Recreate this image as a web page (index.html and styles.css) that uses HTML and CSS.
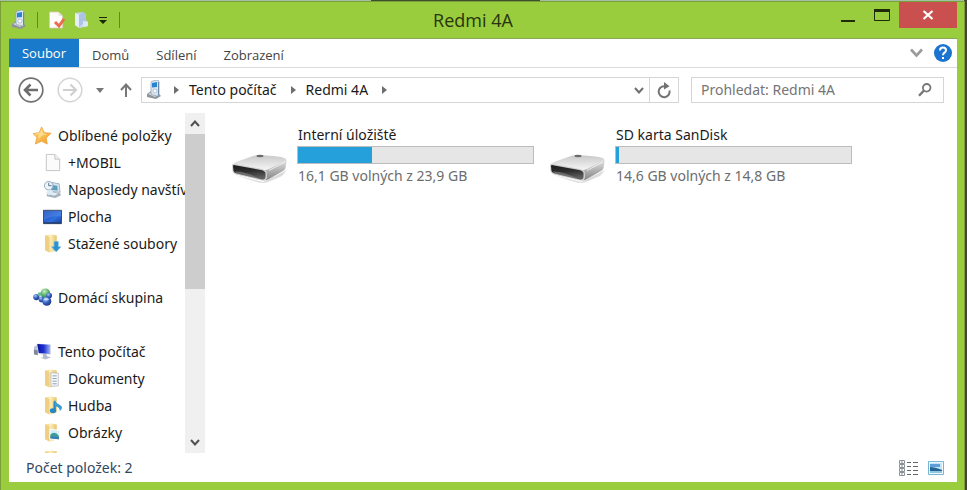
FILE: index.html
```html
<!DOCTYPE html>
<html lang="cs">
<head>
<meta charset="utf-8">
<title>Redmi 4A</title>
<link rel="stylesheet" href="styles.css">
</head>
<body>
<svg class="defs" aria-hidden="true">
  <defs>
    <linearGradient id="g-folder" x1="0" x2="1"><stop offset="0" stop-color="#f3d27a"/><stop offset=".5" stop-color="#fbeab4"/><stop offset="1" stop-color="#e9c469"/></linearGradient>
    <linearGradient id="g-screen" x1="0" y1="0" x2="1" y2="1"><stop offset="0" stop-color="#1b3fa8"/><stop offset=".6" stop-color="#2f6fe0"/><stop offset="1" stop-color="#1c3f9c"/></linearGradient>
    <linearGradient id="g-pc" x1="0" x2="1"><stop offset="0" stop-color="#0a14a0"/><stop offset=".5" stop-color="#1c2fd0"/><stop offset="1" stop-color="#9db4ef"/></linearGradient>
    <linearGradient id="g-top" x1="0" y1="0" x2="0" y2="1"><stop offset="0" stop-color="#c8c8c8"/><stop offset="1" stop-color="#f6f6f6"/></linearGradient>
    <linearGradient id="g-side" x1="0" y1="0" x2="0" y2="1"><stop offset="0" stop-color="#e8e8e8"/><stop offset=".5" stop-color="#b4b4b4"/><stop offset="1" stop-color="#858585"/></linearGradient>
    <linearGradient id="g-slot" x1="0" y1="0" x2=".2" y2="1"><stop offset="0" stop-color="#1a1a1a"/><stop offset=".5" stop-color="#2e2e2e"/><stop offset="1" stop-color="#606060"/></linearGradient>
    <linearGradient id="g-star" x1="0" y1="0" x2="1" y2="1"><stop offset="0" stop-color="#ffe08a"/><stop offset="1" stop-color="#f39a1e"/></linearGradient>
    <radialGradient id="g-ballb" cx=".35" cy=".3" r=".8"><stop offset="0" stop-color="#a9c6f5"/><stop offset=".5" stop-color="#3560c0"/><stop offset="1" stop-color="#16307c"/></radialGradient>
    <radialGradient id="g-ballg" cx=".4" cy=".3" r=".8"><stop offset="0" stop-color="#c4f0c0"/><stop offset=".6" stop-color="#4fa862"/><stop offset="1" stop-color="#2a7548"/></radialGradient>
  </defs>
  <symbol id="player" viewBox="0 0 16 20">
    <path d="M1 14l4-3 8 3 2 2-5 3-9-2z" fill="#8e9499"/><path d="M2 14l4-2 6 3-3 2z" fill="#d3d8dc"/>
    <path d="M5 3q0-2 2-2l4-1q2 0 2 2v12q0 2-2 2l-4-1q-2 0-2-2z" fill="#dce7f0" stroke="#8aa0b5" stroke-width=".7"/>
    <path d="M6 3l5-1v5l-5 .5z" fill="#2784d3"/><circle cx="9" cy="11" r="2" fill="#f7fbff" stroke="#93a7bb" stroke-width=".6"/><path d="M12.500 2v13" stroke="#6889a9"/>
  </symbol>
  <symbol id="folder" viewBox="0 0 18 18">
    <path d="M2 1.500l6-1 5 1v14l-6 2-5-2z" fill="url(#g-folder)"/><path d="M2 1.500l4 1.500v14.500l-4-2z" fill="#efd083"/><path d="M6 3l2-2.500" stroke="#fff4cf"/>
  </symbol>
  <symbol id="drive" viewBox="0 0 58 36">
    <path d="M4 24L32 31 56 19 51 25 37 31Q32 33 26 31z" fill="#dcdcdc"/>
    <path d="M31 17L54 8Q56 8 55.500 11L54.500 17Q54 19 52 20L38 28Q35 30 31 29z" fill="url(#g-side)"/>
    <path d="M1 14Q2 12 5 11L22 5Q26 3.500 30 4L47 5.500Q54 6.500 55 8Q55 10 52 11L38 18Q35 19.500 31 19L4 15z" fill="url(#g-top)"/>
    <path d="M1 14Q1 12.500 4 13L31 18Q36 19 36 22V26Q36 30 31 29.500L5 23.500Q2 22.500 1.500 20z" fill="#cdcdcd"/>
    <path d="M2 15Q2 13.800 4 14.200L30 19Q34.500 20 34.500 22.500V25.500Q34.500 29 31 28.500L6 22.500Q3 21.500 2.500 20z" fill="url(#g-slot)"/>
    <path d="M4 20.500Q14 20 29 28L6 22.500z" fill="#8a8a8a" opacity=".6"/>
    <ellipse cx="29" cy="5" rx="3.500" ry="1.200" fill="#6b6b6b"/>
    <path d="M38 19.500L54 11" stroke="#fff" stroke-opacity=".7"/>
  </symbol>
</svg>

<div class="desktop">
<main class="window">
  <header class="titlebar">
    <div class="quick">
      <svg class="q-player" viewBox="0 0 16 20"><use href="#player"/></svg>
      <span class="sep"></span>
      <button class="plain" aria-label="Vlastnosti"><svg width="18" height="18" viewBox="0 0 18 18"><path d="M1.500 1h9l4 4v12h-13z" fill="#fffdfb" stroke="#d9c9ba" stroke-width=".8"/><path d="M10.500 1v4h4" fill="#e8e4df"/><path d="M7 11l4 4 5-7" fill="none" stroke="#ea6c4e" stroke-width="3"/></svg></button>
      <button class="plain" aria-label="Nová složka"><svg width="16" height="18" viewBox="0 0 16 18"><path d="M2 2l7-1 4 2v6l2 2v4l-8 2-5-3z" fill="#c6d6ee"/><path d="M2 2l4 2v13l-4-3z" fill="#e5edf8"/><path d="M6 4l3-3 4 2v7l-7 6z" fill="#adc3e3"/><path d="M10 10l5 1v4l-5 1z" fill="#dce6f3"/></svg></button>
      <button class="plain caret" aria-label="Přizpůsobit panel"><svg width="8" height="7" viewBox="0 0 8 7"><path d="M0 0h8v1H0zM0 3h8L4 7z" fill="#1c2706"/></svg></button>
      <span class="sep"></span>
    </div>
    <h1>Redmi 4A</h1>
    <div class="controls">
      <button class="plain ctl" aria-label="Minimalizovat"><svg width="14" height="14" viewBox="0 0 14 14"><path d="M0 12h14v2H0z" fill="#1f2a08"/></svg></button>
      <button class="plain ctl" aria-label="Maximalizovat"><svg width="16" height="12" viewBox="0 0 16 12"><path d="M.5.5h15v11H.5z" fill="none" stroke="#1f2a08"/><path d="M0 0h16v3H0z" fill="#1f2a08"/></svg></button>
      <button class="plain close" aria-label="Zavřít"><svg width="12" height="10" viewBox="0 0 12 10"><path d="M1.500 1l9 8M10.500 1l-9 8" stroke="#fff" stroke-width="2.200"/></svg></button>
    </div>
  </header>

  <div class="client">
    <nav class="tabs" aria-label="Pás karet">
      <button class="plain file">Soubor</button>
      <button class="plain tab">Domů</button>
      <button class="plain tab">Sdílení</button>
      <button class="plain tab">Zobrazení</button>
      <div class="tab-tools">
        <button class="plain" aria-label="Rozbalit pás karet"><svg width="13" height="10" viewBox="0 0 13 10"><path d="M1 1.500l5.500 6 5.500-6" fill="none" stroke="#9b9b9b" stroke-width="2.600"/></svg></button>
        <button class="plain" aria-label="Nápověda"><svg width="18" height="18" viewBox="0 0 18 18"><circle cx="9" cy="9" r="9" fill="#1b74cf"/><path d="M6 6.500q0-3 3-3t3 2.700q0 1.500-1.500 2.500T9 11.300" fill="none" stroke="#fff" stroke-width="2"/><path d="M8 13h2v2H8z" fill="#fff"/></svg></button>
      </div>
    </nav>

    <div class="navrow">
      <button class="plain" aria-label="Zpět"><svg width="26" height="26" viewBox="0 0 26 26"><circle cx="13" cy="13" r="11.800" fill="none" stroke="#727272" stroke-width="1.700"/><path d="M20 13H8M12.500 7.500L7 13l5.500 5.500" fill="none" stroke="#6d6d6d" stroke-width="2.600"/></svg></button>
      <button class="plain forward" aria-label="Vpřed"><svg width="26" height="26" viewBox="0 0 26 26"><circle cx="13" cy="13" r="11.800" fill="none" stroke="#d4d4d4" stroke-width="1.500"/><path d="M6 13h12M13.500 7.500L19 13l-5.500 5.500" fill="none" stroke="#d0d0d0" stroke-width="2.200"/></svg></button>
      <button class="plain history" aria-label="Historie"><svg width="8" height="5" viewBox="0 0 8 5"><path d="M0 0h8L4 5z" fill="#777"/></svg></button>
      <button class="plain up" aria-label="Nahoru"><svg width="12" height="14" viewBox="0 0 12 14"><path d="M6 14V2M1 7l5-5.500L11 7" fill="none" stroke="#777" stroke-width="2"/></svg></button>
      <div class="address">
        <svg class="a-player" viewBox="0 0 16 20"><use href="#player"/></svg>
        <svg class="arrow" viewBox="0 0 5 8"><path d="M0 0l5 4-5 4z" fill="#6e6e6e"/></svg>
        <a href="#">Tento počítač</a>
        <svg class="arrow" viewBox="0 0 5 8"><path d="M0 0l5 4-5 4z" fill="#6e6e6e"/></svg>
        <a href="#">Redmi 4A</a>
        <svg class="arrow" viewBox="0 0 5 8"><path d="M0 0l5 4-5 4z" fill="#6e6e6e"/></svg>
        <button class="plain drop" aria-label="Předchozí umístění"><svg width="10" height="7" viewBox="0 0 10 7"><path d="M1 1l4 4.500L9 1" fill="none" stroke="#6e6e6e" stroke-width="2"/></svg></button>
        <button class="plain refresh" aria-label="Aktualizovat"><svg width="16" height="17" viewBox="0 0 16 17"><path d="M8.500 4.200A5.500 5.500 0 1 0 13.500 8.500" fill="none" stroke="#727272" stroke-width="2"/><path d="M8 0l5.500 4.200L8 7.500z" fill="#727272"/></svg></button>
      </div>
      <label class="search">
        <input type="text" placeholder="Prohledat: Redmi 4A" aria-label="Prohledat: Redmi 4A">
        <svg width="14" height="14" viewBox="0 0 14 14"><circle cx="8.700" cy="4.800" r="3.800" fill="none" stroke="#777" stroke-width="1.800"/><path d="M6 7.500L1 12.800" stroke="#777" stroke-width="2.400"/></svg>
      </label>
    </div>

    <div class="body">
      <aside class="sidebar">
        <div class="tree">
          <ul>
            <li class="root"><svg viewBox="0 0 20 20"><path d="M9 1l3 6 7 .5-5 5 1 6.500-6-3-6.500 3L4 12 0 8l6.500-1z" fill="url(#g-star)" stroke="#e9a33c" stroke-width=".8"/><path d="M9 3l1.500 5 5 1-6 1-4 4 1-5-4-1.500 5-.5z" fill="#fff0b5" opacity=".6"/></svg><a href="#">Oblíbené položky</a></li>
            <li><svg viewBox="0 0 20 20"><path d="M3.500 1.500h9l5 5v12h-14z" fill="#fbfbfb" stroke="#c3c3c3"/><path d="M12.500 1.500v5h5" fill="#eee" stroke="#c3c3c3"/></svg><a href="#">+MOBIL</a></li>
            <li><svg viewBox="0 0 20 20"><path d="M6 2l11 2 1 9-10-1z" fill="#d7e4ee" stroke="#8ea3b3" stroke-width=".8"/><path d="M8 5l7 1 .5 5-7-.5z" fill="#5b9fbe"/><path d="M4 15l5-3 9 2 1 2-6 3-9-2z" fill="#a3b3bf"/><path d="M6 15l4-2 6 1.500-4 2z" fill="#e3ecf2"/><circle cx="6" cy="6" r="4.500" fill="#edf3f8" stroke="#91a8ba"/><path d="M6 3v3h3" fill="none" stroke="#54718a"/><path d="M3 13l5-3 3 3-5 3z" fill="#dcebf3"/></svg><a href="#">Naposledy navštívené</a></li>
            <li><svg viewBox="0 0 20 20"><path d="M.5 3.500h19v14H.5z" fill="url(#g-screen)" stroke="#394863"/><path d="M1 4h18v6Q8 9 1 14z" fill="#6ba1f2" opacity=".35"/><path d="M1 16h18v1.500H1z" fill="#26406e"/></svg><a href="#">Plocha</a></li>
            <li><svg viewBox="0 0 18 18"><use href="#folder" width="18" height="18"/><path d="M10.500 7h4v5H17l-4.500 5L8 12h2.500z" fill="#2a91d1" stroke="#77bde5" stroke-width=".6"/></svg><a href="#">Stažené soubory</a></li>
          </ul>
          <ul>
            <li class="root"><svg viewBox="0 0 20 20"><circle cx="3.500" cy="9.500" r="3.300" fill="url(#g-ballb)"/><circle cx="7" cy="6.500" r="2" fill="#6dbf9b"/><circle cx="13" cy="5.500" r="5" fill="url(#g-ballg)"/><circle cx="17" cy="8" r="3" fill="url(#g-ballb)"/><circle cx="9" cy="12" r="3" fill="url(#g-ballb)"/><circle cx="14.500" cy="14" r="4.800" fill="url(#g-ballb)"/><path d="M11 12q3-3 6 0-3 2-6 0z" fill="#d4e6fb" opacity=".8"/></svg><a href="#">Domácí skupina</a></li>
          </ul>
          <ul>
            <li class="root"><svg viewBox="0 0 20 20"><path d="M1 5l4-2v11l-4-1z" fill="#bcc5d2"/><path d="M1 8l4 1v5l-4-1z" fill="#7f8898"/><path d="M4 1.500l15 1v11L6 13z" fill="#dbe2ee"/><path d="M4.500 2l13.500 1v9.500L6 11.500z" fill="url(#g-pc)"/><path d="M10 13h4l1 3h-4z" fill="#adb6c4"/><path d="M8 16.500l7-1.500 4 1-6 2.500z" fill="#b2bccb"/></svg><a href="#">Tento počítač</a></li>
            <li><svg viewBox="0 0 18 18"><use href="#folder" width="18" height="18"/><path d="M7.500 3.500l7 .5v12l-7 .5z" fill="#f7f9fb" stroke="#adb5bd" stroke-width=".7"/><path d="M9 6.500h4M9 9h4M9 11.500h4M9 14h4" stroke="#8b9cae" stroke-width=".9"/></svg><a href="#">Dokumenty</a></li>
            <li><svg viewBox="0 0 18 18"><use href="#folder" width="18" height="18"/><path d="M11 5v8.500" stroke="#2489c6" stroke-width="2.200"/><path d="M11 3.500q1 3 5 5t0 6q0-4-5-5z" fill="#389cd5"/><ellipse cx="9.500" cy="14" rx="3" ry="2.300" fill="#2489c6"/></svg><a href="#">Hudba</a></li>
            <li><svg viewBox="0 0 18 18"><use href="#folder" width="18" height="18"/><path d="M6.500 6l9 1v9l-9-1z" fill="#d5edf8" stroke="#f8fbfd"/><path d="M7 11q4-4 8 1v3.500l-8-1z" fill="#3f9a9b"/><path d="M7 12.500l8 1v2l-8-1z" fill="#397bb1"/></svg><a href="#">Obrázky</a></li>
            <li><svg viewBox="0 0 18 18"><use href="#folder" width="18" height="18"/></svg></li>
          </ul>
        </div>
        <div class="scroll">
          <button class="plain" aria-label="Posunout nahoru"><svg width="10" height="7" viewBox="0 0 10 7"><path d="M1 6l4-4.500L9 6" fill="none" stroke="#505050" stroke-width="2"/></svg></button>
          <div class="track"><div class="thumb"></div></div>
          <button class="plain" aria-label="Posunout dolů"><svg width="10" height="7" viewBox="0 0 10 7"><path d="M1 1l4 4.500L9 1" fill="none" stroke="#505050" stroke-width="2"/></svg></button>
        </div>
      </aside>

      <section class="files">
        <article class="volume">
          <svg class="disk" viewBox="0 0 58 36"><use href="#drive"/></svg>
          <div class="info">
            <h2>Interní úložiště</h2>
            <div class="meter"><div class="used" style="width:31.600%"></div></div>
            <p>16,1 GB volných z 23,9 GB</p>
          </div>
        </article>
        <article class="volume">
          <svg class="disk" viewBox="0 0 58 36"><use href="#drive"/></svg>
          <div class="info">
            <h2>SD karta SanDisk</h2>
            <div class="meter"><div class="used" style="width:1.350%"></div></div>
            <p>14,6 GB volných z 14,8 GB</p>
          </div>
        </article>
      </section>
    </div>

    <footer class="status">
      <span class="count">Počet položek: 2</span>
      <button class="plain" aria-label="Podrobnosti"><svg width="19" height="16" viewBox="0 0 19 16"><path d="M.5.5h5v3h-5zM.5 4.500h5v3h-5zM.5 8.500h5v3h-5zM.5 12.500h5v3h-5z" fill="#fff" stroke="#8b9198"/><path d="M2 2h2M2 6h2M2 10h2M2 14h2" stroke="#888"/><path d="M8 2.500h4M14 2.500h5M8 6.500h4M14 6.500h5M8 10.500h4M14 10.500h5M8 14.500h4M14 14.500h5" stroke="#60666d"/></svg></button>
      <button class="plain" aria-label="Velké ikony"><svg width="16" height="14" viewBox="0 0 16 14"><path d="M.5.5h15v13H.5z" fill="#eef8fd" stroke="#75b6d3"/><path d="M2 2h12v10H2z" fill="#c3e5f6"/><path d="M2 3h10v3H2z" fill="#5c9fd6"/><path d="M2 6q5 0 12 3v1H2z" fill="#216394"/><path d="M2 10h12v2H2z" fill="#8fc6dd"/></svg></button>
    </footer>
  </div>
</main>
</div>
</body>
</html>
```
FILE: styles.css
```css
* { box-sizing: border-box; }

body {
  margin: 0;
  font: 14px/20px "Noto Sans", "Open Sans", sans-serif;
  color: #1a1a1a;
}

svg { display: block; flex: none; }
.defs { position: absolute; width: 0; height: 0; }
a { color: inherit; text-decoration: none; }
h1, h2, p, ul { margin: 0; padding: 0; font-weight: 400; }
ul { list-style: none; }

.plain {
  display: flex;
  align-items: center;
  justify-content: center;
  padding: 0;
  border: 0;
  background: none;
  color: inherit;
  font: inherit;
}

.desktop {
  height: 100vh;
  padding: 1px 2px 0 0;
  background: linear-gradient(90deg, #a3c0a4 0 371px, #3e4d2c 371px 540px, #a3c0a4 540px calc(100% - 3px), #4a4232 calc(100% - 3px));
}

.window {
  display: flex;
  flex-direction: column;
  height: 100%;
  padding: 0 7px 8px 8px;
  border: 1px solid #7a9f38;
  border-bottom: 0;
  background: #9acd3d;
}

.titlebar {
  display: grid;
  grid-template-columns: 1fr auto 1fr;
  flex: none;
  height: 36px;
}

.titlebar h1 {
  padding: 4px 20px 0 0;
  color: #27340d;
  font-family: "Open Sans", "Noto Sans", sans-serif;
  font-size: 18px;
  line-height: 28px;
}

.quick { display: flex; align-items: center; height: 36px; padding-left: 2px; }
.q-player { width: 16px; height: 20px; }
.sep { width: 1px; height: 16px; margin: 0 10px; background: #64872a; }
.sep + .plain { margin-right: 7px; }
.caret { margin: 0 2px 0 10px; }

.controls { display: flex; justify-content: flex-end; height: 26px; }
.ctl { width: 34px; height: 26px; }
.close { width: 58px; background: #c9504f; }

.client {
  display: flex;
  flex: 1;
  flex-direction: column;
  min-height: 0;
  border-top: 1px solid #8aa65a;
  background: #fff;
}

.tabs {
  display: flex;
  flex: none;
  height: 29px;
  border-bottom: 1px solid #dadbdc;
  color: #444;
  font-family: "Open Sans", "Noto Sans", sans-serif;
  font-size: 13px;
}
.file { width: 70px; height: 28px; background: #1979ca; color: #fff; }
.tab { padding: 4px 13px 0; margin-right: 1px; }
.tab-tools { display: flex; align-items: center; gap: 11px; margin-left: auto; padding-right: 5px; }

.navrow {
  display: flex;
  flex: none;
  align-items: center;
  height: 44px;
  margin-bottom: 1px;
  padding: 0 13px 0 9px;
}
.forward { margin-left: 13px; }
.history { margin-left: 13px; }
.up { margin: 0 9px 0 16px; }

.address {
  display: flex;
  flex: 1;
  align-items: center;
  min-width: 0;
  height: 26px;
  border: 1px solid #d5d5d5;
}
.a-player { width: 16px; height: 20px; margin: 0 12px 0 4px; }
.arrow { width: 5px; height: 8px; margin-right: 10px; }
.address a { margin-right: 14px; white-space: nowrap; }
.drop { margin-left: auto; margin-right: 5px; }
.refresh { width: 29px; height: 24px; border-left: 1px solid #d5d5d5; }

.search {
  display: flex;
  flex: 0 1 253px;
  align-items: center;
  min-width: 0;
  height: 26px;
  margin-left: 12px;
  padding: 0 11px 0 9px;
  border: 1px solid #d5d5d5;
}
.search input {
  flex: 1;
  min-width: 0;
  padding: 0;
  border: 0;
  outline: 0;
  background: none;
  font: inherit;
}
.search input::placeholder { color: #757575; opacity: 1; }

.body { display: flex; flex: 1; min-height: 0; }

.sidebar { display: flex; width: 196px; flex: none; }
.tree { flex: 1; min-width: 0; padding-top: 9px; overflow: hidden; }
.tree ul { margin-bottom: 27px; }
.tree li {
  display: flex;
  align-items: center;
  gap: 6px;
  height: 27px;
  padding-left: 34px;
  white-space: nowrap;
}
.tree .root { padding-left: 24px; }
.tree svg { width: 19px; height: 19px; }

.scroll { display: flex; flex-direction: column; width: 20px; flex: none; background: #f0f0f0; }
.scroll button { height: 21px; flex: none; }
.track { flex: 1; }
.thumb { height: 52%; background: #cdcdcd; }

.files {
  display: grid;
  flex: 1;
  grid-template-columns: repeat(auto-fill, 303px);
  align-content: start;
  gap: 15px;
  padding: 12px 0 0 26px;
}
.volume { display: flex; gap: 8px; }
.disk { width: 58px; height: 36px; margin-top: 26px; }
.info { flex: 1; min-width: 0; }
.info h2, .info p { padding-left: 1px; font-size: 14px; white-space: nowrap; }
.info h2 { line-height: 20px; }
.meter { height: 18px; margin: 1px 0 2px; border: 1px solid #bcbcbc; background: #e6e6e6; }
.used { height: 100%; background: #26a0da; }
.info p { color: #6d6d6d; }

.status {
  display: flex;
  flex: none;
  align-items: center;
  gap: 10px;
  height: 29px;
  padding: 0 13px 0 17px;
  color: #33475f;
}
.count { margin-right: auto; }
```
